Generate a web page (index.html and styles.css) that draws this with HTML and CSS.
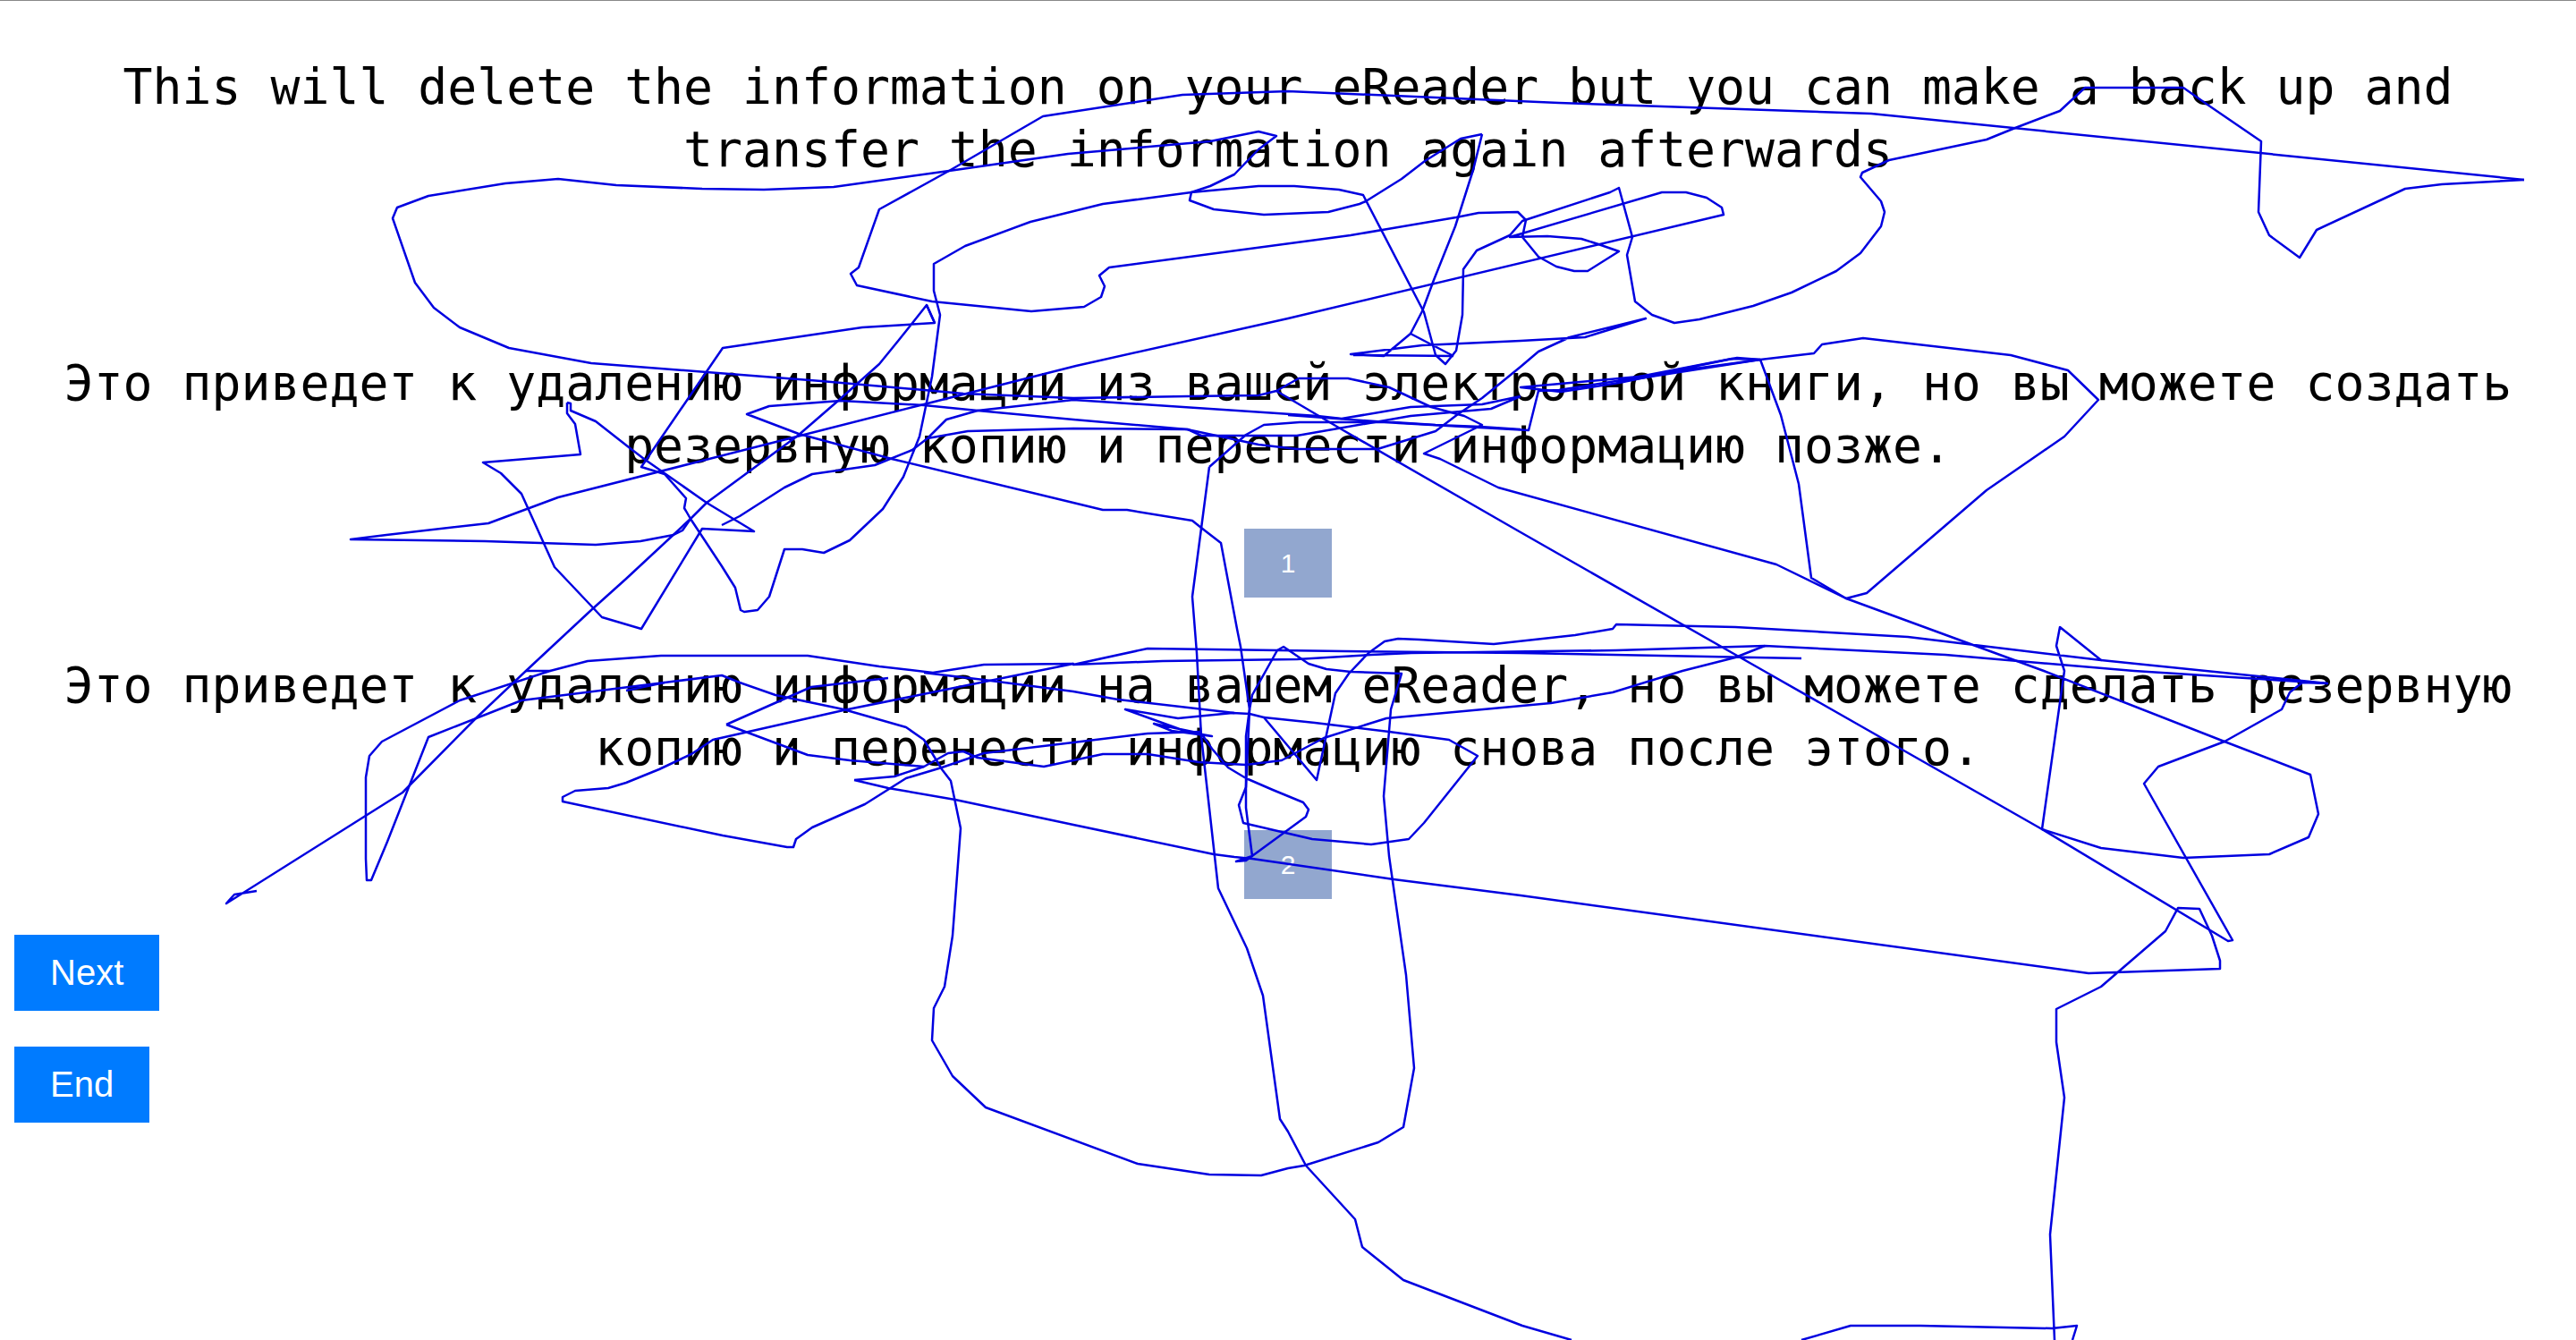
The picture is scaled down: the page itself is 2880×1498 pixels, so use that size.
FILE: index.html
```html
<!DOCTYPE html>
<html lang="en">
<head>
  <meta charset="utf-8">
  <title>Back up your eReader</title>
  <link rel="stylesheet" href="styles.css">
</head>
<body>

<div class="step_list">
  <p class="step_text first">This will delete the information on your eReader but you can make a back up and transfer the information again afterwards</p>

  <p class="step_text second">Это приведет к удалению информации из вашей электронной книги, но вы можете создать резервную копию и перенести информацию позже.</p>
  <div class="step_num">1</div>

  <p class="step_text">Это приведет к удалению информации на вашем eReader, но вы можете сделать резервную копию и перенести информацию снова после этого.</p>
  <div class="step_num last">2</div>
</div>

<div class="step_buttons">
  <a class="step_button" href="#">Next</a>
  <a class="step_button" href="#">End</a>
</div>

<!-- the signature somebody scribbled over the page -->
<svg class="scribble" viewBox="0 0 2880 1498" width="2880" height="1498">
  <path d="M2822 201L2730 206L2689 211L2590 257L2571 288L2537 263L2525 237L2528 158L2468 117L2441 98L2331 98L2303 124L2253 143L2221 156L2112 179L2082 193L2080 198L2103 225L2107 237L2103 253L2080 283L2053 303L2003 327L1960 342L1900 357L1872 361L1847 352L1828 337L1819 285L1825 265L1810 210L1800 215L1702 247L1688 263L1651 280L1636 301L1635 352L1628 392L1616 407L1605 397L1592 349L1524 218L1497 212L1447 208L1407 208L1332 215L1233 228L1152 248L1079 275L1044 295L1044 325L1051 352L1042 421L1028 488L1010 533L987 569L950 604L921 618L897 614L877 614L860 667L847 682L832 684L828 682L822 657L807 633L772 580L768 573L765 568L767 557L743 530L717 522L808 389L964 366L1045 361L1036 341L1005 380L983 407L937 448L892 487L790 562L772 580L700 647L661 682L588 750L533 802L450 886L253 1010L262 1000L287 996"/>
  <path d="M2822 201L2092 127L1743 115L1440 102L1322 106L1166 130L1061 191L983 234L960 299L951 306L958 319L1042 337L1153 348L1212 343L1231 332L1235 320L1229 308L1240 299L1510 263L1628 243L1653 238L1697 237L1706 246L1702 265L1720 287L1740 298L1760 303L1775 303L1810 281L1787 273L1768 267L1730 264L1688 265L1858 215L1885 215L1908 221L1925 232L1927 240L1440 356L1203 409L1033 452L891 488L624 556L546 585L432 598L392 603L542 605L666 609L716 605L753 598L763 593L772 580"/>
  <path d="M1625 398L1577 373L1553 393L1547 398L1510 396L1590 386L1700 381L1772 377L1840 356L1755 377L1720 393L1700 410L1657 445L1630 463L1605 482L1540 502L1450 502L1407 497L1327 480L1200 469L1093 459L1033 453L940 448L860 454L835 463L893 485L997 513L1200 562L1233 570L1260 570L1333 582L1343 590L1365 607L1383 703L1387 723L1397 793L1393 823L1393 903L1400 957L1382 963L1393 962L1460 913L1463 905L1457 897L1423 883L1393 870L1373 858L1355 837L1343 820L1290 809L1310 817L1355 823L1327 818L1258 793L1317 803L1378 797L1397 798L1413 802L1472 872L1493 775L1508 753L1530 730L1548 717L1563 714L1587 715L1670 720L1761 710L1803 703L1807 698L1940 701L2133 712L2349 738L2303 701L2299 722L2308 750L2283 927L2349 948L2441 959L2537 955L2581 936L2592 910L2583 866L2487 829L2285 750L2064 669L2025 646L2011 541L1991 464L1968 402L1936 401L1807 426L1743 436L1720 437L1709 481L1564 473L1440 464"/>
  <path d="M1657 150L1633 155L1593 180L1567 200L1527 225L1520 228L1485 237L1413 240L1357 234L1330 224L1332 215L1353 208L1380 195L1407 167L1427 152L1407 147L1353 158L1194 172L1061 191L932 209L854 212L785 211L689 207L624 200L565 205L479 219L444 232L439 244L464 316L485 344L514 366L569 389L661 406L790 416L918 426L1033 436L1077 440L1200 445L1328 443L1407 442L1427 437L1452 423L1507 423L1553 433L1600 455L1637 465L1657 475L1592 507L1610 513L1675 545L1986 631L2064 669L2087 663L2221 548L2308 488L2346 447L2312 414L2248 397L2083 378L2037 385L2028 395L1968 402L1873 415L1810 428L1745 438L1700 433L1843 420L1942 400L1968 402"/>
  <path d="M1657 150L1647 190L1627 253L1603 313L1590 348L1577 373M1513 397L1625 398M1036 341L1045 361"/>
  <path d="M1427 437L1500 480L1700 595L1972 750L2283 927L2491 1052L2496 1051L2397 876L2413 857L2487 829L2551 793L2560 774L2574 763L2602 764L2386 750L2175 732L1973 722L1807 727L1578 730L1533 732L1450 737L1300 739L1200 743L1283 725L1503 728L1700 730L2014 736"/>
  <path d="M634 450L638 451L638 459L666 471L703 500L720 513L790 562L843 594L785 591L717 703L673 690L620 634L583 552L560 529L540 517L649 508L643 474L634 462L634 450"/>
  <path d="M807 587L827 577L877 545L908 530L978 520L1020 503L1037 490L1058 469L1093 459L1200 447L1473 465L1500 468L1577 455L1630 453L1657 452L1700 443M1037 490L1082 482L1200 479L1328 480L1343 487L1450 487L1577 465L1633 460L1667 457L1700 443"/>
  <path d="M1352 522L1393 486L1413 475L1453 472L1558 472L1605 475L1655 477L1700 480M1352 522L1333 667L1338 730L1343 823L1362 993L1394 1060L1412 1113L1431 1251L1440 1265L1460 1303L1515 1363L1523 1394L1569 1431L1702 1482L1757 1498"/>
  <path d="M588 750L615 750L514 783L427 829L413 845L409 869L409 960L410 984L415 984L433 941L479 824L583 783L743 763L807 755L827 763L867 777L943 793L1013 813L1033 827L1053 860L1063 873L1074 926L1065 1046L1056 1103L1044 1127L1042 1163L1065 1203L1102 1238L1272 1301L1352 1313L1410 1314L1440 1306L1458 1303L1541 1277L1569 1260L1581 1194L1572 1090L1553 957L1547 890L1555 793L1567 753L1510 751L1483 748L1463 742L1435 723L1428 727L1400 777L1397 793"/>
  <path d="M615 750L657 739L739 733L903 733L983 745L1043 752L1100 743L1200 742L1047 773L943 794L797 827L773 843L737 860L700 875L680 881L643 884L629 891L629 896L808 934L880 947L887 947L890 938L908 925L967 899L1013 870L1053 858L1100 842L1200 830L1283 820L1343 818"/>
  <path d="M1033 752L1100 760L1200 773L1250 782L1380 797M700 772L743 763M812 810L907 768L993 758M812 810L903 844L950 850L1033 857L1060 842L1077 840L1093 847L1167 857L1233 843L1283 843L1340 852L1393 855L1433 850L1480 825L1550 803L1734 786L1803 774L1881 750L1940 735L1973 722"/>
  <path d="M955 872L1000 868L1033 857M955 872L993 881L1068 894L1200 922L1357 955L1380 958L1400 960L1558 983L1700 1001L2335 1088L2482 1083L2482 1074L2473 1046L2459 1016L2435 1015L2421 1041L2349 1103L2299 1128L2299 1165L2308 1227L2292 1380L2297 1498M2317 1498L2322 1482L2294 1485L2147 1482L2069 1482L2014 1498"/>
  <path d="M1413 802L1470 808L1553 818L1620 827L1652 845L1592 920L1575 938L1533 944L1467 938L1390 920L1385 900L1393 880L1397 793"/>
  <path d="M2349 738L2602 764M1968 402L1807 427"/>
</svg>

</body>
</html>
```

FILE: styles.css
```css
/** the whole page **/
html, body {
  margin: 0;
  height: 100%;
  overflow: hidden;
}

body {
  position: relative;
  border-top: 1px solid #888888;
  box-sizing: border-box;
  background-color: #FFFFFF;
  font-family: "Liberation Sans", Arial, sans-serif;
}

/** the three messages and their numbers **/
.step_list {
  display: flex;
  flex-direction: column;
  align-items: center;
  padding-top: 61px;
}

.step_text {
  margin: 0;
  width: 100%;
  text-align: center;
  font-family: "DejaVu Sans Mono", monospace;
  font-size: 54.78px;
  line-height: 70px;
  color: #000000;
}

.step_text.first {
  margin-bottom: 191px;
}

.step_num {
  width: 98px;
  height: 77px;
  margin: 58px 0 63px;
  display: flex;
  align-items: center;
  justify-content: center;
  background-color: #92A7CF;
  color: #FFFFFF;
  font-size: 30px;
}

.step_num.last {
  margin: 57px 0 40px;
}

/** next and end, stacked on the left **/
.step_buttons {
  display: flex;
  flex-direction: column;
  align-items: flex-start;
  gap: 40px;
  margin-left: 16px;
}

.step_button {
  padding: 20px 40px;
  background-color: #007BFF;
  color: #FFFFFF;
  font-size: 40px;
  line-height: 45px;
  text-decoration: none;
}

.scribble {
  position: absolute;
  top: -1px;
  left: 0;
  pointer-events: none;
  fill: none;
  stroke: #0000E0;
  stroke-width: 2.5;
  stroke-linejoin: round;
}
```
